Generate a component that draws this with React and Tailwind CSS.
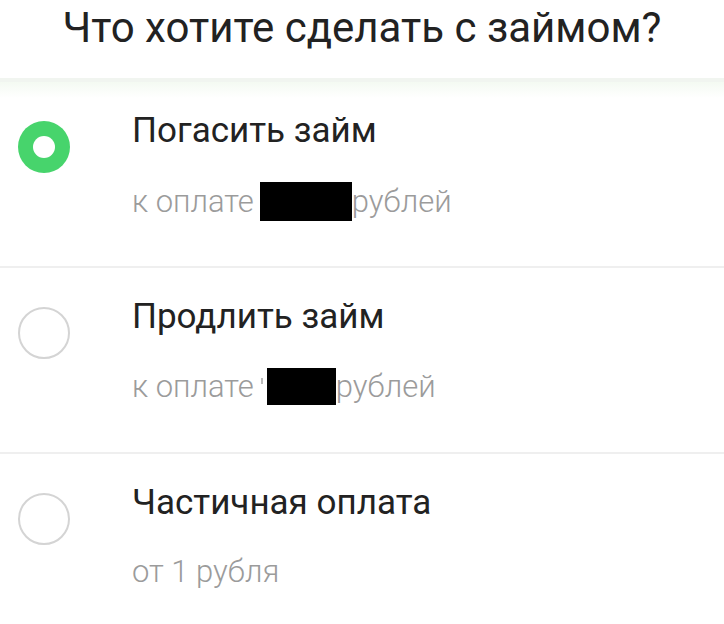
import React, { useState } from "react";

const options = [
  { id: "pay", title: "Погасить займ", note: "к оплате", box: "ml-[6px] w-[92px] h-[39px]", tail: "рублей" },
  { id: "extend", title: "Продлить займ", note: "к оплате", box: "ml-[4px] w-[69px] h-[37px]", tail: "рублей", tick: true },
  { id: "part", title: "Частичная оплата", note: "от 1 рубля" },
];

const Radio = ({ checked }) =>
  checked ? (
    <span className="mt-[10px] flex h-[52px] w-[52px] shrink-0 items-center justify-center rounded-full bg-[#47d46c]">
      <span className="h-[22px] w-[22px] rounded-full bg-white" />
    </span>
  ) : (
    <span className="mt-[10px] h-[52px] w-[52px] shrink-0 rounded-full border-2 border-[#d4d4d4]" />
  );

export default function App() {
  const [selected, setSelected] = useState("pay");

  return (
    <div className="min-h-screen bg-white font-['Roboto','Liberation_Sans',sans-serif]">
      {/* header */}
      <div className="flex h-[82px] items-start justify-center border-b-4 border-[#f1f5f0]">
        <h1 className="mt-[4px] text-[42px] leading-[48px] text-[#222]">Что хотите сделать с займом?</h1>
      </div>

      {options.map((opt, i) => (
        <button
          key={opt.id}
          onClick={() => setSelected(opt.id)}
          className={`flex h-[186px] w-full items-start gap-[62px] pl-[18px] pt-[29px] text-left ${
            i < options.length - 1 ? "border-b-2 border-[#efefef]" : ""
          } ${selected === opt.id && i === 0 ? "bg-[linear-gradient(#f4faf2,#ffffff_16px)]" : ""}`}
        >
          <Radio checked={selected === opt.id} />
          <div className="flex flex-col">
            <span className="text-[35px] leading-[40px] text-[#222]">{opt.title}</span>
            <span className="mt-[31px] flex items-center text-[31px] font-light leading-[36px] text-[#9b9b9b]">
              {opt.note}
              {opt.tick && <span className="ml-[7px] mb-[12px] h-[6px] w-[2px] bg-[#bbb]" />}
              {opt.box && (
                <>
                  <span className={`${opt.box} bg-black`} />
                  {opt.tail}
                </>
              )}
            </span>
          </div>
        </button>
      ))}
    </div>
  );
}
